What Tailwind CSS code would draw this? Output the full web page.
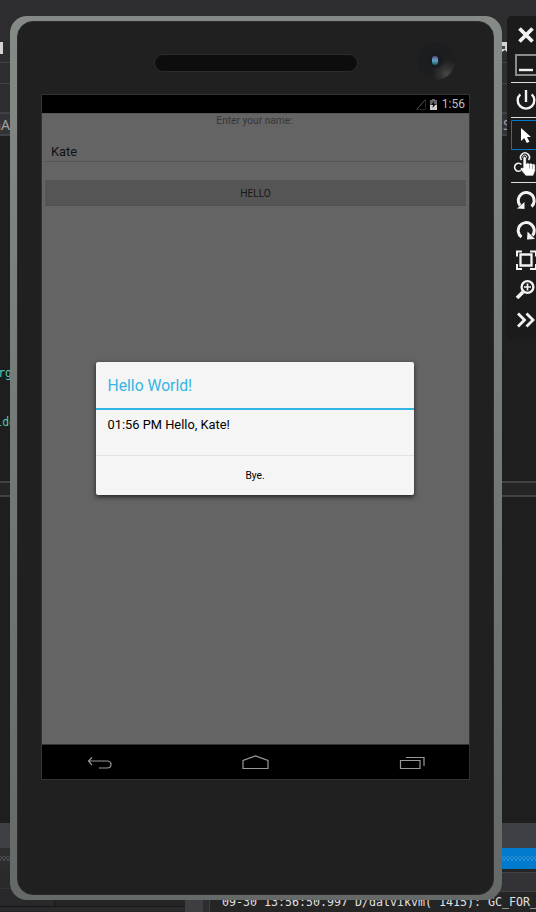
<!DOCTYPE html>
<html lang="en">
<head>
<meta charset="utf-8">
<title>Android emulator</title>
<script src="https://cdn.jsdelivr.net/npm/@tailwindcss/browser@4"></script>
</head>
<body class="relative w-[536px] h-[912px] overflow-hidden bg-[#1e1e1e] font-[Roboto,sans-serif]">

<!-- Editor behind the emulator -->
<div class="flex flex-col w-full h-full">
  <div class="h-[62px] bg-[#2d2d30] flex justify-between pt-[42px]">
    <div class="w-[3px] h-3 bg-[#d4d4d4]"></div>
    <div class="w-[34px] h-3"><svg class="w-1.5 h-[11px]" viewBox="0 0 6 11"><path d="M0 0h6v11L3 8 0 10z" fill="#d4d4d4"/><path d="M0 4h3v3H0z" fill="#444"/></svg></div>
  </div>
  <div class="h-[22px] bg-[#2d2d30] border-y border-[#434346]"></div>
  <div class="h-7 bg-[#2d2d30]"></div>
  <div class="h-[24px] bg-[#333337] border-y-2 border-[#3f3f46] flex justify-between text-[14px] leading-[21px] text-[#a0a0a0] font-['Noto_Sans',sans-serif]">
    <div class="w-[10px] flex justify-end"><span>nA</span></div>
    <div class="w-[34px] pl-px">S</div>
  </div>
  <div class="h-[345px] font-['DejaVu_Sans_Mono',monospace] text-[11.5px] leading-[14px] text-[#4ec9b0]">
    <div class="w-[12px] h-[279px] pt-[230px] flex justify-end"><span>rg</span></div>
    <div class="w-[16px] flex justify-end"><span>ide</span></div>
  </div>
  <div class="h-4 border-y-2 border-[#434346] bg-[#252526]"></div>
  <div class="h-[326px]"></div>
  <div class="h-[25px] bg-[#3f3f46]"></div>
  <div class="h-[21px] flex">
    <div class="w-1/2 bg-[#2d2d30] py-2"><div class="h-[5px] bg-[radial-gradient(#515155_0.7px,transparent_0.8px),radial-gradient(#515155_0.7px,transparent_0.8px)] bg-size-[4px_4px] bg-position-[0_0,2px_2px]"></div></div>
    <div class="w-1/2 bg-[#007acc] py-2"><div class="h-[5px] bg-[radial-gradient(#59a8de_0.6px,transparent_0.8px),radial-gradient(#59a8de_0.6px,transparent_0.8px)] bg-size-[4px_4px] bg-position-[0_0,2px_2px]"></div></div>
  </div>
  <div class="h-[43px] flex">
    <div class="w-[185px] bg-[#252526]">
      <div class="h-5 bg-[#2a2a2c] border-b border-[#333337]"></div>
      <div class="h-[18px] w-[55px] bg-[#29292b] border-r border-b border-[#19191a]"></div>
      <div class="h-[5px] bg-[#2a2a2c] -mt-px border-t border-[#161617]"></div>
    </div>
    <div class="w-[18px] bg-[#3e3e42]"></div>
    <div class="w-1.5 bg-[#2d2d30]"></div>
    <div class="flex-1 bg-[#252526] border-l border-[#3f3f46] overflow-hidden">
      <div class="mt-[3px] h-5 bg-[#333337] border-y border-[#434346]"></div>
      <pre class="pl-3 pt-[3px] font-['DejaVu_Sans_Mono',monospace] text-[11.64px] leading-[14px] text-[#e0e0e0]">09-30 13:56:50.997 D/dalvikvm( 1415): GC_FOR_</pre>
    </div>
  </div>
</div>

<!-- Phone -->
<div class="absolute left-[10px] top-4 w-[492px] h-[884px] rounded-[17px] bg-linear-to-b from-[#858a86] via-[#737976] to-[#656a68] pl-[7px] pr-2 py-[5px]">
  <div class="h-full rounded-[16px] bg-[#202020] border border-[#2a2c2c] flex flex-col">
    <div class="relative h-[72px] shrink-0">
      <div class="ml-[136px] mt-[32px] w-[204px] h-[18px] rounded-full bg-[#0d0d0d] border border-[#2c2c2c]"></div>
      <div class="absolute left-[399px] top-[20px] size-[38px] rounded-full bg-[radial-gradient(circle_at_78%_84%,#4a4645_0,#302f30_16%,#1d1e20_33%,#1b1d20_100%)]">
        <div class="absolute left-[11px] top-[11px] size-[15px] rounded-full bg-[#181b20]"></div>
        <div class="absolute left-[15px] top-[14px] w-[6px] h-[9px] rounded-full bg-linear-to-b from-[#55517d] via-[#64a0cb] to-[#135b5d]"></div>
      </div>
    </div>
    <div class="ml-[23px] w-[429px] h-[686px] border border-[#333] flex flex-col bg-[#646464]">
      <div class="h-[18px] bg-black flex justify-end items-center pr-[4px] text-[12px] leading-[18px] text-[#bebebe]">
        <svg class="w-[10px] h-[11px]" viewBox="0 0 10 11" fill="none"><path stroke="#555" d="M.5 10.500 9.500.5"/><path stroke="#222" d="M9.500.5v10h-9"/></svg>
        <svg class="ml-[4px] w-[7px] h-[11px]" viewBox="0 0 7 11"><path fill="#666" d="M2 0h3v1h2v10H0V1h2z"/><path fill="#cfcfcf" d="M0 6h7v5H0z"/><path d="M4 2 1 6h2L2.500 9 6 5H4z" fill="#111"/></svg>
        <span class="ml-[5px]">1:56</span>
      </div>
      <div class="flex-1 flex flex-col px-[3px] border-t border-[#585858]">
        <div class="h-[13px] text-center text-[10.2px] leading-[13px] text-[#363636] pr-[2px]">Enter your name:</div>
        <div class="h-[35px] pl-[6px] pt-[16px] text-[12.9px] leading-[17px] text-[#111] border-b border-[#545454] flex">Kate</div>
        <div class="mt-[18px] h-[26px] bg-[#555] rounded-[1px] border-b border-[#505050] text-center text-[10.2px] leading-[28px] text-[#151515]">HELLO</div>
      </div>
      <div class="h-[35px] border-t border-[#333] bg-black">
        <svg class="block w-[427px] h-[34px]" viewBox="0 1 427 34" fill="none" stroke="#999" stroke-width="1.2">
          <path d="M50 13.500 46.500 17l3.500 4M47 17h18q4 0 4 3.500t-4 3.500h-8"/>
          <path d="M201 24.500v-8l12.500-4.500 12.500 4.500v8z"/>
          <path d="M358.500 16.500h19.500v8h-19.500zM364 13.500h18v8.500"/>
        </svg>
      </div>
    </div>
  </div>
</div>

<!-- Dialog -->
<div class="absolute left-24 top-[362px] w-[318px] h-[133px] rounded-[2px] bg-[#f5f5f5] shadow-[0_2px_5px_rgba(0,0,0,0.65)] flex flex-col">
  <div class="shrink-0 h-[48px] border-b-2 border-[#33b5e5] pl-[11.5px] text-[15.7px] leading-[48px] text-[#33b5e5]">Hello World!</div>
  <div class="shrink-0 h-[46px] border-b border-[#e3e3e3] pl-[11.5px] pt-[6px] text-[12.85px] leading-[18px] text-black">01:56 PM Hello, Kate!</div>
  <div class="h-[39px] text-center text-[10.2px] leading-[40px] text-black">Bye.</div>
</div>

<!-- Emulator toolbar -->
<div class="absolute left-[507px] top-4 w-[36px] h-[323px] rounded-[5px] bg-[#1b1b1b]">
  <svg class="block w-[36px] h-[323px]" viewBox="507 16 36 323" fill="none" stroke="#f2f2f2" stroke-width="2.400">
    <path stroke-width="3.800" d="m519.500 28.500 13 13m0-13-13 13"/>
    <path stroke="#8c8c8c" stroke-width="2" d="M516 55h22v20h-22z"/>
    <path d="M519 70h14"/>
    <path stroke="#ddd" stroke-width="1" d="M511 82.500h32M511 117.500h32M511 182.500h32"/>
    <path d="M526 90v12M520.300 94.300a8.300 8.300 0 1 0 11.400 0"/>
    <path stroke="#007acc" stroke-width="1" d="M511.500 120.500h32v29h-32z"/>
    <path fill="#fff" stroke="none" d="M521 128v13l3.200-3 2.600 5 2.600-1.300-2.400-4.700h4z"/>
    <path stroke-width="1.600" d="M521.500 160a4.400 4.400 0 1 1 7 0M521.500 164.500a4 4 0 1 0 0 5.500"/>
    <path stroke-width="1" d="M523 158a2 2 0 1 1 3.500 0"/>
    <path fill="#fff" stroke="#1b1b1b" stroke-width=".7" d="M523 157.500q1.700-2 3.300 0v6q1.500-1.300 3 0 1.700-1.200 3 .5 2-1 3 1v6l-2 5h-7.500l-5.500-6.500q0-2.800 2.700-1.500z"/>
    <path stroke="#777" stroke-width=".7" d="M529.500 164.500v4M532.500 165v4"/>
    <path stroke-width="3" d="M531.500 206.500a8 8 0 1 0-11.500-1"/>
    <path fill="#f2f2f2" stroke="none" d="m517 208.500 7.500.5V202z"/>
    <path stroke-width="3" d="M521.500 237a8 8 0 1 1 11-1.500"/>
    <path fill="#f2f2f2" stroke="none" d="m535 239-8 .5.500-8z"/>
    <path stroke-width="2" d="M517 256.500v-5h5M530 251.500h6v5M517 264v5h5M530 269h6v-5"/>
    <path stroke-width="2.300" d="M520.500 254.500h11v11h-11z"/>
    <circle cx="527.500" cy="287" r="5.900"/>
    <path stroke-width="1.700" d="M524 287h7m-3.500-3.500v7"/>
    <path stroke-width="3.800" d="m523 292-6 6"/>
    <path stroke-width="2.800" d="m518 313.500 6.500 6.500-6.500 6.500M526.500 313.500l6.500 6.500-6.500 6.500"/>
  </svg>
</div>
</body>
</html>
